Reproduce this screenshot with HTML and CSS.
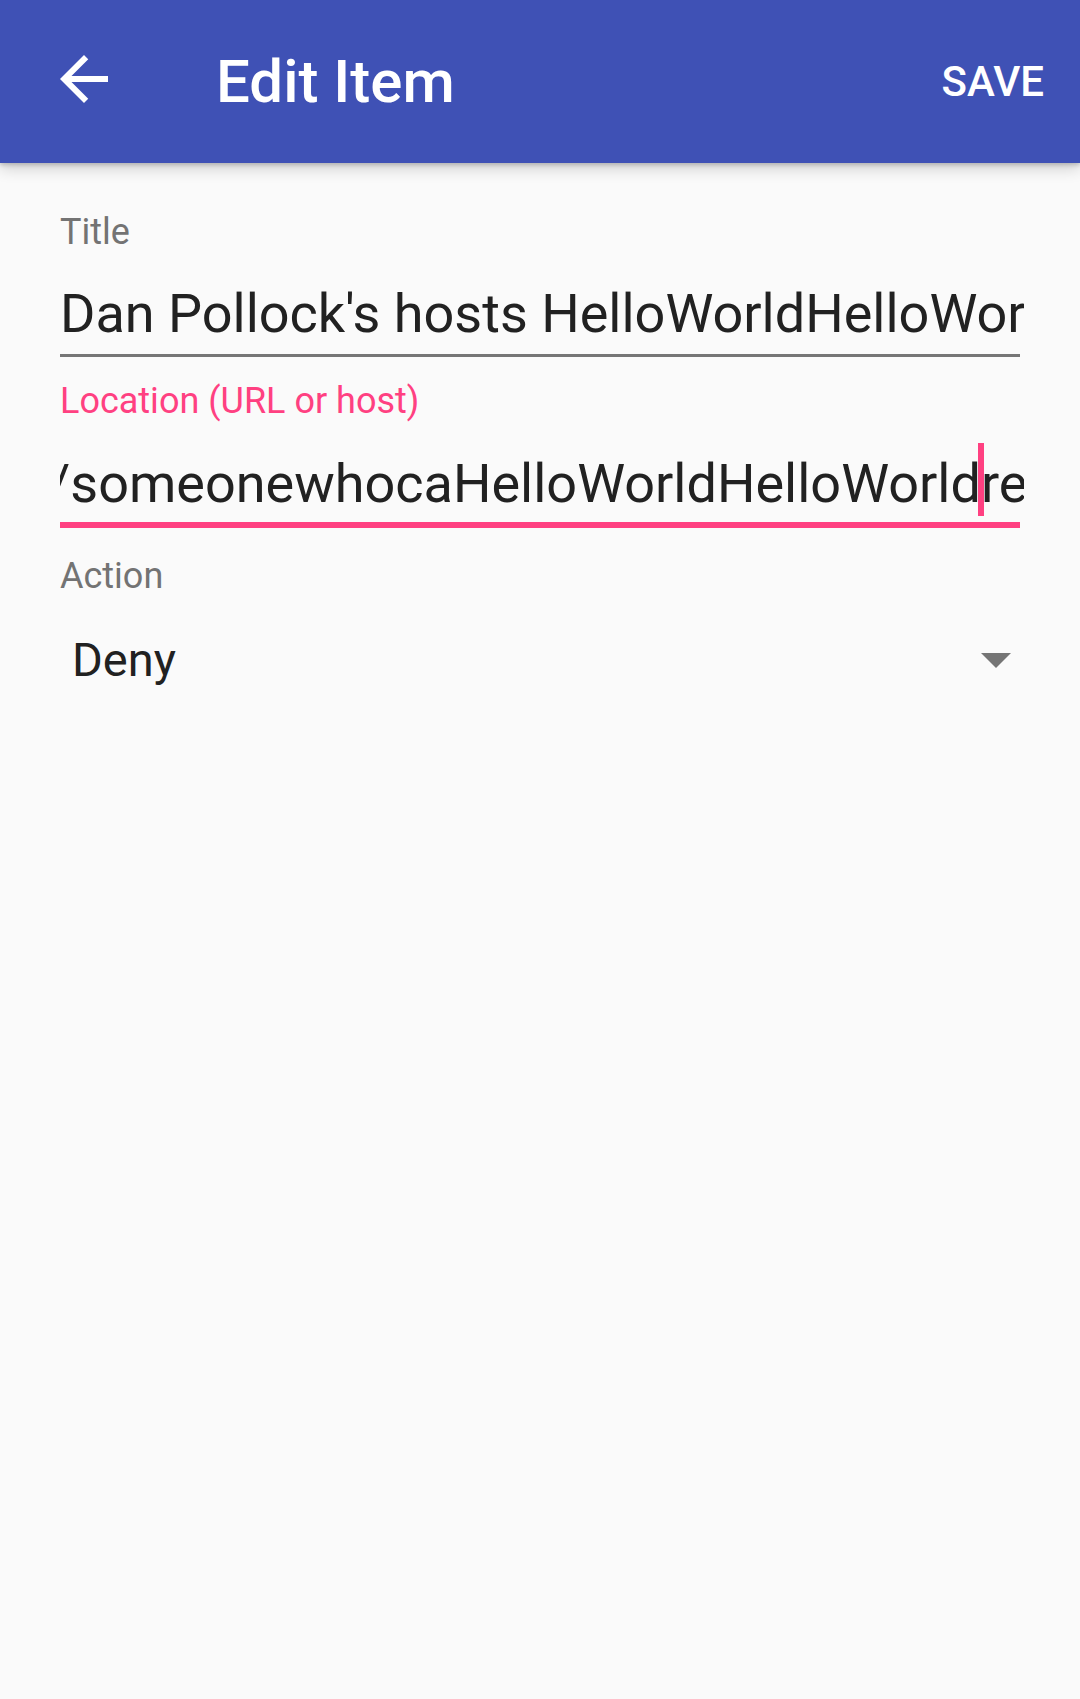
FILE: index.html
```html
<!DOCTYPE html>
<html lang="en">
<head>
<meta charset="utf-8">
<title>Edit Item</title>
<link rel="stylesheet" href="styles.css">
</head>
<body>
<header class="appbar">
  <svg class="back" viewBox="0 0 24 24" width="72" height="72" aria-hidden="true">
    <path d="M20 11H7.83l5.59-5.59L12 4l-8 8 8 8 1.41-1.41L7.83 13H20v-2z" fill="#fff"/>
  </svg>
  <h1 class="title">Edit Item</h1>
  <span class="save">SAVE</span>
</header>
<main class="form">
  <div class="field">
    <label class="label">Title</label>
    <div class="input"><span class="value">Dan Pollock's hosts HelloWorldHelloWorldHelloWorld</span></div>
  </div>
  <div class="field focused">
    <label class="label">Location (URL or host)</label>
    <div class="input"><span class="value scrolled">/someonewhocaHelloWorldHelloWorld<span class="caret"></span>res.org/hosts</span></div>
  </div>
  <div class="field">
    <label class="label">Action</label>
    <div class="spinner">
      <span class="spin-value">Deny</span>
      <span class="arrow"></span>
    </div>
  </div>
</main>
</body>
</html>
```
FILE: styles.css
```css
html, body {
  margin: 0;
  padding: 0;
}
body {
  background: #fafafa;
  font-family: Roboto, "Noto Sans", "Liberation Sans", sans-serif;
  width: 1080px;
  min-height: 1699px;
}
.appbar {
  height: 163px;
  background: #3f51b5;
  display: flex;
  align-items: center;
  box-shadow: 0 2px 4px rgba(0,0,0,0.18), 0 6px 14px rgba(0,0,0,0.16);
  position: relative;
  z-index: 1;
}
.back {
  margin-left: 48px;
  margin-top: -6px;
  flex: none;
}
.title {
  margin: 0 0 0 96px;
  font-size: 60px;
  font-weight: 500;
  color: #fff;
  line-height: 72px;
  flex: 1;
}
.save {
  font-size: 42px;
  font-weight: 500;
  color: #fff;
  margin-right: 36px;
}
.form {
  padding: 47px 60px 0 60px;
}
.field {
  display: flex;
  flex-direction: column;
}
.label {
  font-size: 36px;
  line-height: 44px;
  color: #737373;
}
.input {
  margin-top: 28px;
  padding-bottom: 8px;
  border-bottom: 3px solid #767676;
}
.value {
  display: block;
  font-size: 54px;
  line-height: 64px;
  color: #212121;
  white-space: nowrap;
  overflow: hidden;
  margin-right: -4px;
}
.focused {
  margin-top: 22px;
}
.focused .label {
  color: #ff4081;
}
.focused .input {
  margin-top: 20px;
  padding-bottom: 6px;
  border-bottom: 6px solid #ff4081;
}
.scrolled {
  text-indent: -12px;
}
.caret {
  display: inline-block;
  width: 6px;
  height: 73px;
  background: #ff4081;
  vertical-align: -14px;
  margin: 0 -3px;
}
.field:last-child {
  margin-top: 26px;
}
.spinner {
  margin-top: 32px;
  height: 60px;
  display: flex;
  align-items: center;
  justify-content: space-between;
  padding: 0 9px 0 12px;
}
.spin-value {
  font-size: 47px;
  line-height: 60px;
  color: #212121;
}
.arrow {
  width: 0;
  height: 0;
  border-left: 15px solid transparent;
  border-right: 15px solid transparent;
  border-top: 15px solid #757575;
}
```
